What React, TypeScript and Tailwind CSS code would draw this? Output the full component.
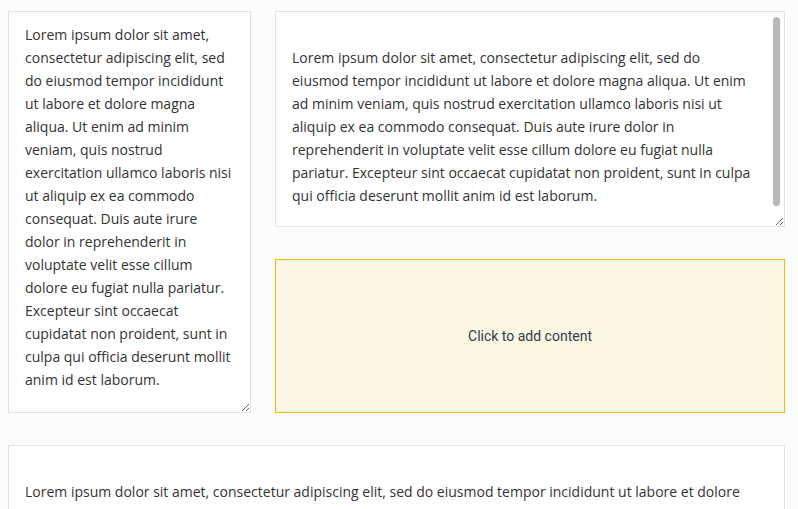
const lorem =
  'Lorem ipsum dolor sit amet, consectetur adipiscing elit, sed do eiusmod tempor incididunt ut labore et dolore magna aliqua. Ut enim ad minim veniam, quis nostrud exercitation ullamco laboris nisi ut aliquip ex ea commodo consequat. Duis aute irure dolor in reprehenderit in voluptate velit esse cillum dolore eu fugiat nulla pariatur. Excepteur sint occaecat cupidatat non proident, sunt in culpa qui officia deserunt mollit anim id est laborum.';

const areaClass =
  "block bg-white border border-[#e2e4e4] px-4 py-[11px] text-[14px] leading-[23px] text-[#333333] font-['Open_Sans',sans-serif] outline-none";

export default function App() {
  return (
    <div className="min-h-[509px] bg-[#fbfcfc] pl-2 pt-[11px]">
      <div className="flex gap-6">
        <textarea
          className={`${areaClass} w-[243px] h-[402px] overflow-hidden`}
          defaultValue={lorem}
        />
        <div className="flex flex-col gap-8">
          <div className="relative">
            <textarea
              className={`${areaClass} pr-[31px] w-[510px] h-[216px] overflow-hidden`}
              defaultValue={'\n' + lorem + '\n'}
            />
            {/* scrollbar thumb */}
            <div className="absolute top-[6px] right-[5px] w-[7px] h-[189px] rounded-full bg-[#b6b6bc] pointer-events-none" />
          </div>
          <button className="w-[510px] h-[154px] bg-[#fbf7e4] border border-[#f2b90c] flex items-center justify-center text-[14px] text-[#333b45] font-['Roboto',sans-serif]">
            Click to add content
          </button>
        </div>
      </div>
      <textarea
        className={`${areaClass} mt-8 w-[777px] h-[200px] overflow-hidden`}
        defaultValue={'\n' + lorem}
      />
    </div>
  );
}
